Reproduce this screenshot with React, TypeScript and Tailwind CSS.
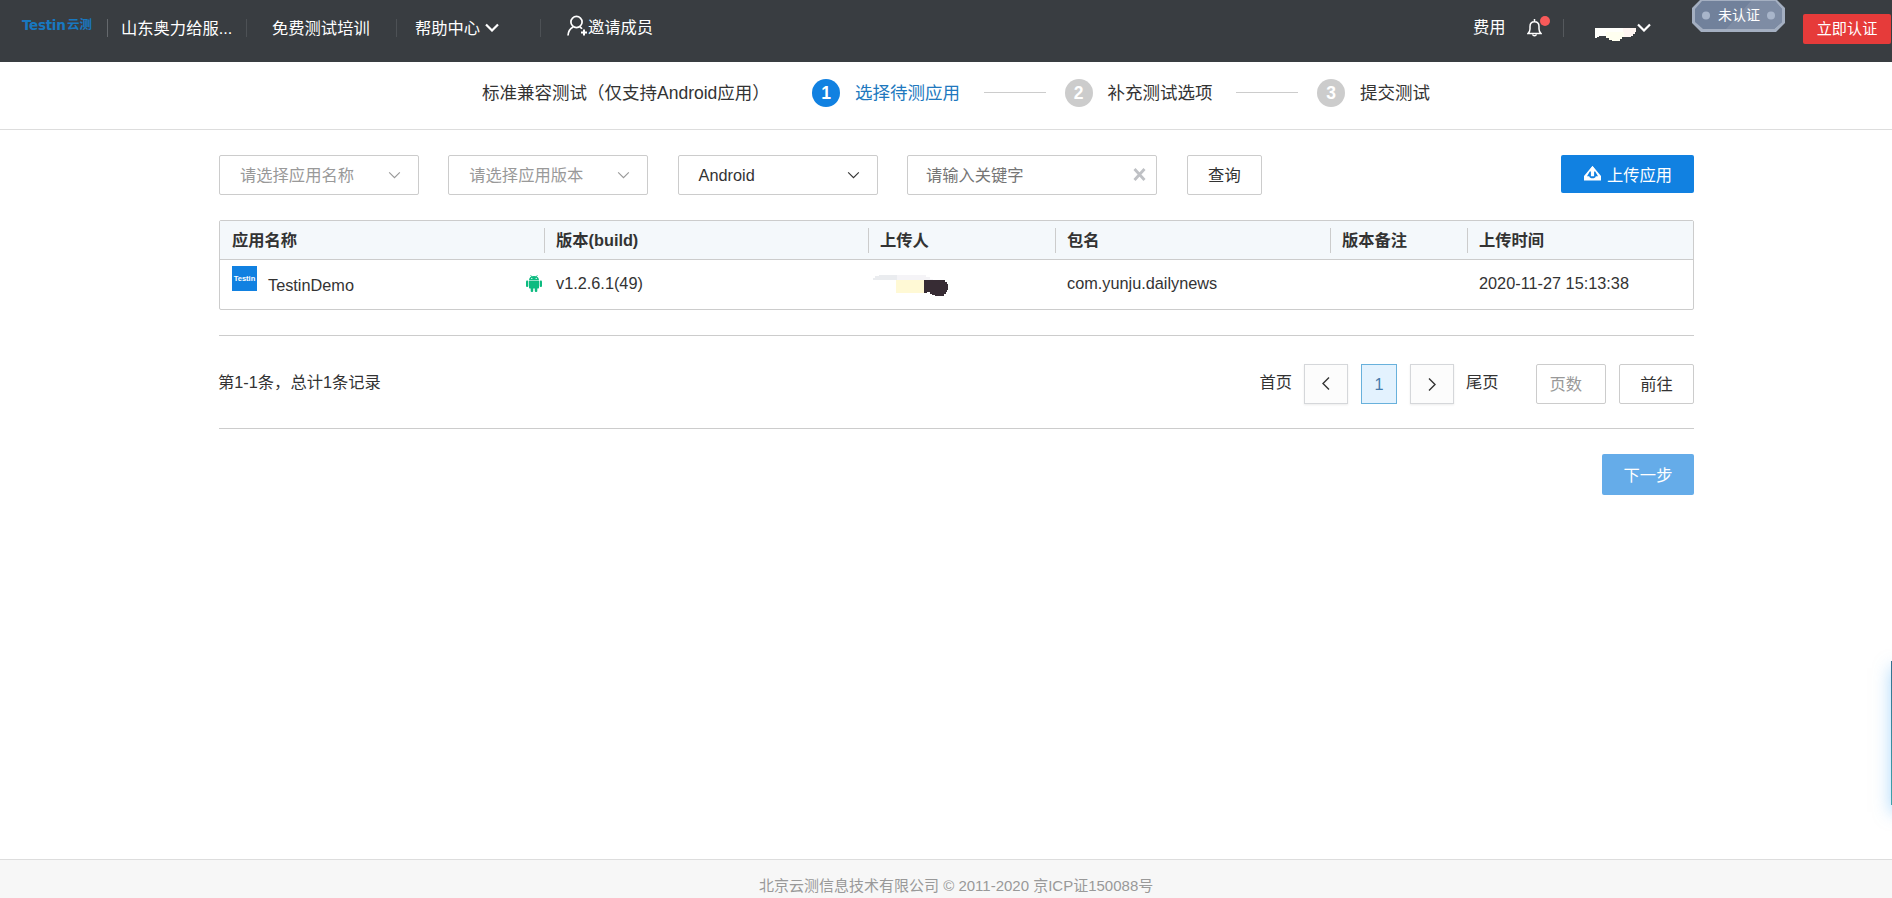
import React from 'react';

const steps = [
  { no: 1, label: '选择待测应用', active: true },
  { no: 2, label: '补充测试选项', active: false },
  { no: 3, label: '提交测试', active: false },
];

const columns = [
  { title: '应用名称', width: 'w-[324px]' },
  { title: '版本(build)', width: 'w-[324px]' },
  { title: '上传人', width: 'w-[187px]' },
  { title: '包名', width: 'w-[275px]' },
  { title: '版本备注', width: 'w-[137px]' },
  { title: '上传时间', width: 'flex-1' },
];

const Chevron = ({ className, width = 1.3 }: { className: string; width?: number }) => (
  <svg className={className} viewBox="0 0 14 9" fill="none" stroke="currentColor" strokeWidth={width}>
    <path d="M1 1.5 7 7.5 13 1.5" />
  </svg>
);

const Divider = ({ className }: { className: string }) => (
  <span className={`h-[18px] w-px shrink-0 ${className}`} />
);

const Logo = () => (
  <div className="flex w-[92px] items-center pt-[13px] pl-[22px] leading-6 whitespace-nowrap text-[#1878c0]">
    <span className="w-[45px] font-['DejaVu_Sans','Noto_Sans_CJK_SC',sans-serif] text-[13.5px] font-semibold tracking-[-0.3px]">Testin</span>
    <span className="text-[12.5px] font-semibold">云测</span>
  </div>
);

const Header = () => (
  <header className="flex h-[62px] shrink-0 items-start bg-[#393d41] text-white">
    <Logo />
    <div className="flex h-[55px] flex-1 items-center">
      <Divider className="ml-[15px] bg-[#65696d]" />
      <span className="ml-[13px] w-[125px] whitespace-nowrap">山东奥力给服...</span>
      <Divider className="bg-[#4d5155]" />
      <span className="ml-[25px] w-[124px] whitespace-nowrap">免费测试培训</span>
      <Divider className="bg-[#4d5155]" />
      <span className="ml-[18px] w-[66px] whitespace-nowrap">帮助中心</span>
      <Chevron className="ml-[4px] h-[9px] w-[14px]" width={2.2} />
      <Divider className="ml-[41px] bg-[#4d5155]" />
      <svg className="mb-[4px] ml-[26px] h-[21px] w-[21px]" viewBox="0 0 21 21" fill="none" stroke="currentColor" strokeWidth="1.7">
        <circle cx="9.5" cy="7" r="5.6" />
        <path d="M1 20.5c.3-4 2-7 5.2-8.5M12.8 12c1 .5 1.7 1 2.2 1.7" />
        <path d="M17 14.5v6M14 17.5h6" strokeWidth="2" />
      </svg>
      <span className="-mt-px">邀请成员</span>
    </div>
    <div className="flex h-[55px] items-center">
      <span className="-mt-px w-[33px] whitespace-nowrap">费用</span>
      <div className="relative ml-[21px] h-[18px] w-[15px]">
        <svg className="h-[18px] w-[15px]" viewBox="0 0 15 18" fill="none" stroke="currentColor" strokeWidth="1.5">
          <path d="M1 14.5h13c-1.5-1.5-2-2.5-2-4.5V7.5C12 4.5 10 2.7 7.5 2.7S3 4.5 3 7.5V10c0 2-.5 3-2 4.5ZM7.5 0v2.5M5.7 15.5c.3 1.8 3.3 1.8 3.6 0" />
        </svg>
        <span className="absolute -top-[3px] left-[13px] h-[10px] w-[10px] rounded-full bg-[#f85a5a]" />
      </div>
      <Divider className="ml-[21px] bg-[#55595d]" />
      <svg className="mt-[14px] ml-[31px] h-[13px] w-[41px]" viewBox="0 0 41 13" shapeRendering="crispEdges">
        <path fill="#fffffb" d="M0 0h41v4h-1v2h-2v2h-2v1H12V8H4v1H2v1H0Z" />
        <path fill="#fffff0" d="M11 4h18v5h-2v2h-2v2h-8v-1h-3v-2h-3Z" />
        <path fill="#fff6f2" d="M28 0h13v4h-1v2h-2v2h-2v1h-7V4h-1Z" />
      </svg>
      <Chevron className="ml-px h-[9px] w-[14px]" width={2.2} />
    </div>
    <div className="relative ml-[41px] h-[33px] w-[93px]">
      <svg className="-mt-px h-[33px] w-[93px]" viewBox="0 0 93 33">
        <path d="M9 0h75l9 9v15l-9 9H9l-9-9V9Z" fill="#a4afc1" />
        <path d="M10 2h73l7 8v13l-8 7H11l-8-7V10Z" fill="#71819b" />
        <path d="M59 2h24l7 8v13l-8 7H34Z" fill="#7e8ca4" />
        <circle cx="14" cy="16.5" r="4" fill="#a8b5ca" />
        <circle cx="79" cy="16.5" r="4" fill="#a8b5ca" />
      </svg>
      <span className="absolute inset-x-0 top-[5px] pl-px text-center text-[14px] leading-[21px]">未认证</span>
    </div>
    <button className="mt-[14px] mr-px ml-[18px] h-[30px] w-[88px] rounded-[2px] bg-[#e63b3a] text-[15.17px]">
      立即认证
    </button>
  </header>
);

const StepBar = () => (
  <div className="flex h-[68px] shrink-0 items-center border-b border-[#ddd] pb-[5px] pl-[482px] text-[17.5px]">
    <span className="w-[330px] whitespace-nowrap">标准兼容测试（仅支持Android应用）</span>
    {steps.map((step, i) => (
      <div key={step.no} className="flex items-center">
        {i > 0 && <span className="mr-[19px] mb-[2px] ml-[23px] h-px w-[62px] bg-[#ccc]" />}
        <span className={`mr-[15px] flex h-7 w-7 items-center justify-center rounded-full font-semibold text-white ${step.active ? 'bg-[#1181e1]' : 'bg-[#ccc]'}`}>
          {step.no}
        </span>
        <span className={`w-[105.5px] whitespace-nowrap ${step.active ? 'text-[#2078be]' : ''}`}>{step.label}</span>
      </div>
    ))}
  </div>
);

const Select = ({ text, placeholder }: { text: string; placeholder?: boolean }) => (
  <div className={`mr-[29.3px] flex h-10 w-[200px] items-center justify-between rounded-[2px] border border-[#ccc] pr-[17px] pl-5 ${placeholder ? 'text-[#999]' : ''}`}>
    <span>{text}</span>
    <Chevron className="h-[8px] w-[13px]" />
  </div>
);

const Filters = () => (
  <div className="flex items-start">
    <Select text="请选择应用名称" placeholder />
    <Select text="请选择应用版本" placeholder />
    <Select text="Android" />
    <div className="flex h-10 w-[250px] items-center justify-between rounded-[2px] border border-[#ccc] pr-[10px] pl-[18px] text-[#757575]">
      <span>请输入关键字</span>
      <svg className="mb-[2px] h-[13px] w-[13px]" viewBox="0 0 13 13" stroke="#bfc1c5" strokeWidth="2.8">
        <path d="M1.5 1l10 11M11.5 1l-10 11" />
      </svg>
    </div>
    <button className="ml-[30px] h-10 w-[75px] rounded-[2px] border border-[#ccc]">查询</button>
    <button className="ml-auto flex h-[38px] w-[133px] items-center rounded-[2px] bg-[#1181e1] pt-px pl-[23px] text-white">
      <svg className="mr-[6px] mb-[2px] h-[15px] w-[17px]" viewBox="0 0 17 15" fill="currentColor">
        <path d="M8.5 0 0 10v4.5h17V10Z" />
        <path d="M5.8 5.5 3 10.3h2.2c.4 1.4 1.5 2 3.3 2s2.9-.6 3.3-2H14L11.2 5.5Z" fill="#1181e1" />
        <path d="M8.5 0 12.3 5h-2.2v5.300H6.900V5H4.700Z" />
      </svg>
      上传应用
    </button>
  </div>
);

const AndroidIcon = () => (
  <svg className="h-[17px] w-[16px]" viewBox="0 0 16 17" fill="#0dbb80">
    <path d="M3 5.2C3 2.5 5 1 8 1s5 1.5 5 4.2Z" />
    <path d="M3 5.8h10v6.7c0 .6-.4 1-1 1H4c-.6 0-1-.4-1-1Z" />
    <rect x="0" y="5.5" width="2.3" height="6.5" rx="1" />
    <rect x="13.7" y="5.5" width="2.3" height="6.5" rx="1" />
    <rect x="4.7" y="12" width="2.5" height="5" rx="1" />
    <rect x="8.8" y="12" width="2.5" height="5" rx="1" />
    <path d="M4.5 0 6 2.2M11.5 0 10 2.2" stroke="#0dbb80" strokeWidth=".7" />
    <circle cx="5.8" cy="3.4" r=".6" fill="#fff" />
    <circle cx="10.2" cy="3.4" r=".6" fill="#fff" />
  </svg>
);

const AppTable = () => (
  <div className="mt-[25px] h-[90px] rounded-[2px] border border-[#ccc]">
    <div className="flex h-[39px] items-center border-b border-[#ccc] bg-[#f4f8fb] font-bold">
      {columns.map((col, i) => (
        <div key={col.title} className={`flex h-[25px] items-center ${i > 0 ? 'border-l border-[#ccc] pl-[11px]' : 'pl-[12px]'} ${col.width}`}>
          {col.title}
        </div>
      ))}
    </div>
    <div className="flex h-[49px] items-center pb-[3px]">
      <div className="flex w-[324px] items-center pl-[12px]">
        <span className="mb-[9px] flex h-[25px] w-[25px] items-center justify-center bg-[#1181e1] text-[7.5px] font-bold text-white">Testin</span>
        <span className="mt-[3px] ml-[11px]">TestinDemo</span>
        <span className="mr-[2px] ml-auto"><AndroidIcon /></span>
      </div>
      <div className="w-[325px] pl-[12px]">v1.2.6.1(49)</div>
      <div className="w-[186px] pt-[5px] pl-[4px]">
        <svg className="h-[24px] w-[76px]" viewBox="0 0 76 24" shapeRendering="crispEdges">
          <path fill="#eaecef" d="M0 6V4h2V2h4V1h18v5Z" />
          <path fill="#f5f4f7" d="M24 1h29v2h4v2h3v1H24Z" />
          <path fill="#fff9d5" d="M23 6h28v13H23Z" />
          <path fill="#372c34" d="M51 6h21v2h2v2h1v6h-1v2h-1v2h-2v2h-9v-1h-3v-1h-2v-2h-3v1H51Z" />
        </svg>
      </div>
      <div className="w-[275px] pl-[12px]">com.yunju.dailynews</div>
      <div className="w-[137px]" />
      <div className="pl-[12px]">2020-11-27 15:13:38</div>
    </div>
  </div>
);

const Pagination = () => (
  <div className="mt-[25px] flex h-[94px] items-center border-y border-[#ccc]">
    <span className="-ml-px">第1-1条，总计1条记录</span>
    <div className="ml-auto flex items-center pt-[3px]">
      <span className="-mt-[3px] mr-[12px]">首页</span>
      <button className="flex h-10 w-[44px] items-center justify-center border border-[#d5d7da] bg-[#fcfcfc] shadow-[0_1px_2px_rgba(0,0,0,0.08)]">
        <Chevron className="h-[9px] w-[14px] rotate-90" width={1.4} />
      </button>
      <button className="mx-[13px] h-10 w-[36px] border border-[#68b1dc] bg-[#e3f2fe] text-[#477bab]">1</button>
      <button className="flex h-10 w-[44px] items-center justify-center border border-[#d5d7da] bg-[#fcfcfc] pt-[2px] shadow-[0_1px_2px_rgba(0,0,0,0.08)]">
        <Chevron className="h-[9px] w-[14px] -rotate-90" width={1.4} />
      </button>
      <span className="-mt-[3px] ml-[12px] w-[33px]">尾页</span>
      <div className="ml-[37px] flex h-10 w-[70px] items-center rounded-[2px] border border-[#ccc] pl-[12.5px] text-[#999]">页数</div>
      <button className="ml-[13px] h-10 w-[75px] rounded-[2px] border border-[#ccc]">前往</button>
    </div>
  </div>
);

const App: React.FC = () => {
  return (
    <div className="relative flex h-screen flex-col overflow-hidden bg-white font-['Liberation_Sans','Noto_Sans_CJK_SC',sans-serif] text-[16.3px] leading-6 text-[#333]">
      <Header />
      <StepBar />
      <main className="ml-[219px] w-[1475px] flex-1 pt-[25px]">
        <Filters />
        <AppTable />
        <Pagination />
        <div className="mt-[25px] flex justify-end">
          <button className="h-[41px] w-[92px] rounded-[2px] bg-[#65ace9] text-white">下一步</button>
        </div>
      </main>
      <footer className="h-[39px] shrink-0 border-t border-[#ddd] bg-[#f7f7f7] pt-[14px] pl-[759px] text-[15px] text-[#999]">
        北京云测信息技术有限公司 © 2011-2020 京ICP证150088号
      </footer>
      {/* collapsed side panel */}
      <div className="absolute top-[661px] -right-[59px] h-[144px] w-[60px] bg-linear-to-b from-[#33708f] to-[#3fa3ab] shadow-[0_7px_16px_0_rgba(90,180,250,0.5)]" />
    </div>
  );
};

export default App;
